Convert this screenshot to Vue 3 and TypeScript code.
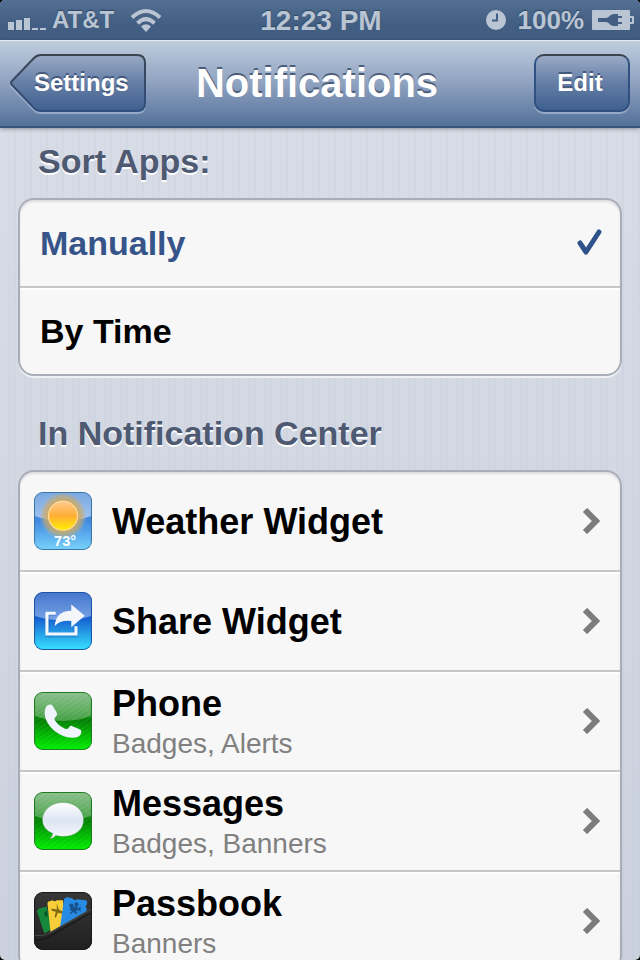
<script setup lang="ts">
import { ref } from 'vue'

type IconName = 'weather' | 'share' | 'phone' | 'messages' | 'passbook'

interface AppEntry {
  name: string
  icon: IconName
  detail?: string
}

const sortOptions: string[] = ['Manually', 'By Time']
const sortBy = ref<string>('Manually')

const apps: AppEntry[] = [
  { name: 'Weather Widget', icon: 'weather' },
  { name: 'Share Widget', icon: 'share' },
  { name: 'Phone', icon: 'phone', detail: 'Badges, Alerts' },
  { name: 'Messages', icon: 'messages', detail: 'Badges, Banners' },
  { name: 'Passbook', icon: 'passbook', detail: 'Banners' },
]
</script>

<template>
  <div class="screen">
    <div class="status">
      <div class="status-side">
        <svg class="signal" width="38" height="20" viewBox="0 0 38 20" aria-hidden="true">
          <path d="M0 12h6v8H0zM8 10h6v10H8zM16 8h6v12h-6zM24 18h6v2h-6zM32 18h6v2h-6z" fill="#bac5d3" />
        </svg>
        <span class="carrier">AT&amp;T</span>
        <svg class="wifi" width="32" height="24" viewBox="0 0 32 24" aria-hidden="true">
          <g fill="none" stroke="#bac5d3" stroke-width="4">
            <path d="M2 9.500Q16 -3.500 30 9.500" />
            <path d="M7.500 15.200Q16 7 24.500 15.200" />
          </g>
          <path d="M11 18.500Q16 14 21 18.500L16 24z" fill="#bac5d3" />
        </svg>
      </div>
      <span class="time">12:23 PM</span>
      <div class="status-side end">
        <svg width="20" height="20" viewBox="0 0 20 20" aria-hidden="true">
          <circle cx="10" cy="10" r="10" fill="#bac5d3" />
          <path d="M11 3.500v7H6" fill="none" stroke="#425f83" stroke-width="2" />
        </svg>
        <span class="percent">100%</span>
        <svg width="42" height="20" viewBox="0 0 42 20" aria-hidden="true">
          <path d="M1 0h36a1 1 0 0 1 1 1v5h3a1 1 0 0 1 1 1v6a1 1 0 0 1-1 1h-3v5a1 1 0 0 1-1 1H1a1 1 0 0 1-1-1V1a1 1 0 0 1 1-1zM38 8v4h2V8z" fill="#bac5d3" fill-rule="evenodd" />
          <path d="M6 8h8c3 0 4-4 8-4h4v2h4v2h-4v4h4v2h-4v2h-4c-4 0-5-4-8-4H6z" fill="#425f83" />
        </svg>
      </div>
    </div>

    <header class="nav">
      <div class="nav-side">
        <a class="back" href="#settings">
          <svg class="back-shape" width="140" height="64" viewBox="0 0 140 64" aria-hidden="true">
            <defs>
              <linearGradient id="back-fill" x1="0" y1="0" x2="0" y2="1">
                <stop offset="0" stop-color="#99aac6" />
                <stop offset=".5" stop-color="#657ea6" />
                <stop offset="1" stop-color="#3f608f" />
              </linearGradient>
              <linearGradient id="back-edge" x1="0" y1="0" x2="0" y2="1">
                <stop offset="0" stop-color="#3b4351" />
                <stop offset="1" stop-color="#2f5081" />
              </linearGradient>
            </defs>
            <path d="M24 3Q27 1 31 1H127Q135 1 135 9V49Q135 57 127 57H31Q27 57 24 54L1 30Q0 29 1 28z" fill="none" stroke="#b9c7da" stroke-width="2" transform="translate(0 2)" opacity=".6" />
            <path d="M24 4Q27 1 31 1H127Q135 1 135 9V49Q135 57 127 57H31Q27 57 24 54L2 31Q0 29 2 27z" fill="url(#back-fill)" stroke="url(#back-edge)" stroke-width="2" />
          </svg>
          <span class="back-label">Settings</span>
        </a>
      </div>
      <h1>Notifications</h1>
      <div class="nav-side end">
        <button class="edit" type="button">Edit</button>
      </div>
    </header>

    <main class="content">
      <h2 id="sort-heading">Sort Apps:</h2>
      <div class="group" role="radiogroup" aria-labelledby="sort-heading">
        <label v-for="option in sortOptions" :key="option" class="option" :class="{ chosen: sortBy === option }">
          <input v-model="sortBy" class="radio" type="radio" name="sort" :value="option" />
          <span>{{ option }}</span>
          <svg v-if="sortBy === option" width="26" height="30" viewBox="0 0 26 30" aria-hidden="true">
            <path d="M4 15L10 24L23 4" fill="none" stroke="#30528a" stroke-width="5" stroke-linecap="round" stroke-linejoin="round" />
          </svg>
        </label>
      </div>

      <h2>In Notification Center</h2>
      <nav class="group">
        <a v-for="app in apps" :key="app.name" class="app" :href="'#' + app.icon">
          <svg v-if="app.icon === 'weather'" class="icon" viewBox="1 1 56 56" aria-hidden="true">
            <defs>
              <linearGradient id="w-bg" x1="0" y1="0" x2="0" y2="1">
                <stop offset="0" stop-color="#3f82d4" />
                <stop offset=".5" stop-color="#438be2" />
                <stop offset="1" stop-color="#78d2fa" />
              </linearGradient>
              <linearGradient id="w-gloss" x1="0" y1="0" x2="0" y2="1">
                <stop offset="0" stop-color="#fff" stop-opacity=".3" />
                <stop offset="1" stop-color="#fff" stop-opacity=".5" />
              </linearGradient>
              <radialGradient id="w-glow">
                <stop offset=".55" stop-color="#e5a932" />
                <stop offset=".72" stop-color="#d5ad61" stop-opacity=".7" />
                <stop offset="1" stop-color="#d8b576" stop-opacity="0" />
              </radialGradient>
              <linearGradient id="w-sun" x1="0" y1="0" x2="0" y2="1">
                <stop offset="0" stop-color="#ffc98c" />
                <stop offset=".5" stop-color="#ffae35" />
                <stop offset="1" stop-color="#fff000" />
              </linearGradient>
            </defs>
            <rect x="1" y="1" width="56" height="56" rx="8" fill="url(#w-bg)" />
            <path d="M1 24V9Q1 1 9 1H49Q57 1 57 9V24Q29 34 1 24z" fill="url(#w-gloss)" />
            <circle cx="29" cy="24" r="23" fill="url(#w-glow)" />
            <circle cx="29" cy="24" r="18" fill="none" stroke="#cb9d4f" stroke-width="5" stroke-dasharray="1 2" opacity=".4" />
            <circle cx="29" cy="24" r="14" fill="url(#w-sun)" stroke="#ffe2ad" />
            <text x="31" y="53" class="degrees" text-anchor="middle">73°</text>
            <rect x="1" y="1" width="56" height="56" rx="8" fill="none" stroke="#3c75a9" stroke-width="2" />
          </svg>

          <svg v-else-if="app.icon === 'share'" class="icon" viewBox="1 1 56 56" aria-hidden="true">
            <defs>
              <linearGradient id="s-bg" x1="0" y1="0" x2="0" y2="1">
                <stop offset="0" stop-color="#1552be" />
                <stop offset=".45" stop-color="#165fd0" />
                <stop offset="1" stop-color="#37e3ff" />
              </linearGradient>
              <linearGradient id="s-gloss" x1="0" y1="0" x2="0" y2="1">
                <stop offset="0" stop-color="#fff" stop-opacity=".2" />
                <stop offset="1" stop-color="#fff" stop-opacity=".42" />
              </linearGradient>
            </defs>
            <rect x="1" y="1" width="56" height="56" rx="8" fill="url(#s-bg)" />
            <path d="M1 24V9Q1 1 9 1H49Q57 1 57 9V24Q29 33 1 24z" fill="url(#s-gloss)" />
            <path d="M22 21H14V42H41V35" fill="none" stroke="#174f9e" stroke-width="4" opacity=".3" transform="translate(0 1)" />
            <path d="M22 21.500H13.500V41.500H41.500V34" fill="none" stroke="#f4f7fc" stroke-width="3" />
            <path d="M37 13L50 24L37 35V29Q26 28 21 34Q22 19 37 19z" fill="#f5f6fa" />
            <rect x="1" y="1" width="56" height="56" rx="8" fill="none" stroke="#1b55a5" stroke-width="2" />
          </svg>

          <svg v-else-if="app.icon === 'phone' || app.icon === 'messages'" class="icon" viewBox="1 1 56 56" aria-hidden="true">
            <defs>
              <linearGradient :id="app.icon + '-bg'" x1="0" y1="0" x2="0" y2="1">
                <stop offset="0" stop-color="#2c8a2e" />
                <stop offset=".5" stop-color="#027f03" />
                <stop offset="1" stop-color="#00f000" />
              </linearGradient>
              <linearGradient :id="app.icon + '-gloss'" x1="0" y1="0" x2="0" y2="1">
                <stop offset="0" stop-color="#fff" stop-opacity=".45" />
                <stop offset="1" stop-color="#fff" stop-opacity=".25" />
              </linearGradient>
              <pattern :id="app.icon + '-lines'" width="4" height="4" patternUnits="userSpaceOnUse" patternTransform="rotate(55)">
                <rect width="2" height="4" fill="#9f9" opacity=".08" />
              </pattern>
              <linearGradient :id="app.icon + '-mark'" x1="0" y1="0" x2="0" y2="1">
                <stop offset="0" stop-color="#fff" />
                <stop offset=".5" stop-color="#dce5f2" />
                <stop offset="1" stop-color="#f6f9ff" />
              </linearGradient>
            </defs>
            <rect x="1" y="1" width="56" height="56" rx="8" :fill="`url(#${app.icon}-bg)`" />
            <rect x="1" y="1" width="56" height="56" rx="8" :fill="`url(#${app.icon}-lines)`" />
            <path d="M1 24V9Q1 1 9 1H49Q57 1 57 9V24Q29 34 1 24z" :fill="`url(#${app.icon}-gloss)`" />
            <path v-if="app.icon === 'phone'" d="M17 13Q19 13 20 16L23 21Q24 23 22 25Q20 26 21 28Q24 33 30 36Q33 38 35 35Q36 33 38 34L45 37Q48 38 46 42Q43 46 36 45C22 44 8 29 12 17Q13 13 17 13z" fill="#f0f4fc" />
            <path v-else d="M29 11C40 11 49 18 49 28S40 44 29 44Q25 44 22 43Q20 46 16 46Q19 44 19 41Q9 37 9 28C9 18 18 11 29 11z" fill="url(#messages-mark)" stroke="#25852b" stroke-width="1" stroke-opacity=".4" />
            <rect x="1" y="1" width="56" height="56" rx="8" fill="none" stroke="#1d7c20" stroke-width="2" />
          </svg>

          <svg v-else class="icon" viewBox="1 1 56 56" aria-hidden="true">
            <defs>
              <linearGradient id="p-bg" x1="0" y1="0" x2="0" y2="1">
                <stop offset="0" stop-color="#373737" />
                <stop offset="1" stop-color="#202020" />
              </linearGradient>
              <linearGradient id="p-pocket" x1="0" y1="0" x2="0" y2="1">
                <stop offset="0" stop-color="#323232" />
                <stop offset="1" stop-color="#1f1f1f" />
              </linearGradient>
            </defs>
            <rect x="1" y="1" width="56" height="56" rx="8" fill="url(#p-bg)" />
            <path d="M4 20Q4 18 6 17L13 15L20 36L11 41z" fill="#16883b" />
            <path d="M14 19a3 3 0 1 0 0 6z" fill="#0b5424" />
            <path d="M14 12Q14 10 16 10L19 9Q21 11 23 9L29 9L31 31L17 40z" fill="#f7cd38" />
            <path d="M23 12L25 18L29 20V22L24 21L22 26L21 25L22 20L18 19V17L23 18z" fill="#806912" />
            <path d="M30 8Q31 6 33 6L38 7Q40 10 43 8L51 9Q53 10 52 13Q50 15 52 17L51 22L26 36z" fill="#288be3" />
            <g fill="#16538e">
              <circle cx="37" cy="14" r="2" />
              <circle cx="42" cy="13" r="2" />
              <path d="M36 15h7v4h-7zM43 17l3-2v5l-3-2zM38 19l-3 3h2l2-2 2 2h2l-2-3z" />
            </g>
            <path d="M1 43H7Q11 43 15 41L57 17V49Q57 57 49 57H9Q1 57 1 49z" fill="url(#p-pocket)" stroke="#484848" />
            <path d="M2 47H8Q12 47 16 44L56 21" fill="none" stroke="#161616" />
            <rect x="1" y="1" width="56" height="56" rx="8" fill="none" stroke="#1a1a1a" stroke-width="2" />
          </svg>

          <span class="labels">
            <span class="name">{{ app.name }}</span>
            <span v-if="app.detail" class="detail">{{ app.detail }}</span>
          </span>
          <svg class="chevron" width="18" height="26" viewBox="0 0 18 26" aria-hidden="true">
            <path d="M3 2L14 13L3 24" fill="none" stroke="#7c7c7c" stroke-width="6" />
          </svg>
        </a>
      </nav>
    </main>
  </div>
</template>

<style>
body {
  margin: 0;
  background: #000;
}
</style>

<style scoped>
.screen {
  display: flex;
  flex-direction: column;
  height: 100vh;
  overflow: hidden;
  border-radius: 5px;
  background:
    linear-gradient(rgba(190, 198, 214, 0) 15%, rgba(190, 198, 214, 0.5)),
    repeating-linear-gradient(90deg, #d8dce6 0 8px, #d4d9e3 8px 10px, #d6dbe5 10px 14px, #d2d8e2 14px 16px);
  font-family: "Liberation Sans", Arial, Helvetica, sans-serif;
}

.status {
  display: grid;
  grid-template-columns: 1fr auto 1fr;
  align-items: center;
  flex: none;
  box-sizing: border-box;
  height: 40px;
  padding: 0 6px 2px 8px;
  background: linear-gradient(#536f92, #425f83 60%, #405d81);
  color: #bac5d3;
  font-weight: bold;
  text-shadow: 0 -1px 1px #2c4565;
}

.status-side {
  display: flex;
  align-items: center;
  gap: 8px;
}

.status-side.end {
  justify-content: flex-end;
}

.carrier {
  font-size: 24px;
  line-height: 40px;
  margin-left: -2px;
}

.wifi {
  margin-left: 8px;
}

.time {
  padding-top: 2px;
  font-size: 28px;
}

.percent {
  padding-left: 4px;
  font-size: 26px;
  line-height: 40px;
}

.nav {
  display: grid;
  grid-template-columns: 1fr auto 1fr;
  align-items: center;
  flex: none;
  box-sizing: border-box;
  height: 88px;
  padding: 0 10px;
  border-bottom: 2px solid #365680;
  background: linear-gradient(#bfcddd, #8fa2c0 50%, #54719a);
  box-shadow: inset 0 1px 0 #e3eaf2, 0 1px 4px rgba(0, 0, 0, 0.35);
}

.nav-side {
  display: flex;
}

.nav-side.end {
  justify-content: flex-end;
}

.back {
  display: grid;
  width: 136px;
  height: 58px;
  color: #fff;
  text-decoration: none;
}

.back-shape,
.back-label {
  grid-area: 1 / 1;
}

.back-label {
  z-index: 1;
  padding-left: 24px;
}

.back-label,
.edit {
  color: #fff;
  font-size: 24px;
  font-weight: bold;
  line-height: 58px;
  text-shadow: 0 -2px 0 #43587b;
}

.edit {
  box-sizing: border-box;
  width: 96px;
  height: 58px;
  padding: 0 4px 0 0;
  border: 2px solid #2f5081;
  border-top-color: #3b4351;
  border-radius: 10px;
  background: linear-gradient(#99aac6, #657ea6 50%, #3f608f);
  box-shadow: 0 2px 0 rgba(185, 199, 218, 0.6);
  font-family: inherit;
  line-height: 54px;
}

h1 {
  margin: 0;
  padding-right: 6px;
  color: #fff;
  font-size: 40px;
  line-height: 84px;
  text-shadow: 0 -2px 0 #4c5d77;
}

.content {
  flex: 1;
  min-height: 0;
  padding: 0 18px;
  overflow: hidden;
}

h2 {
  margin: 0;
  padding: 13px 20px 17px;
  color: #4e5972;
  font-size: 34px;
  line-height: 40px;
  text-shadow: 0 2px 0 #fff;
}

.group + h2 {
  padding-top: 37px;
}

.group {
  border: 2px solid #a8adb8;
  border-radius: 16px;
  background: #f7f7f7;
  box-shadow: 0 2px 0 #eef0f4, inset 0 2px 2px #dedede;
}

.option {
  display: flex;
  align-items: center;
  justify-content: space-between;
  height: 86px;
  padding: 0 18px 0 20px;
  color: #000;
  font-size: 34px;
  font-weight: bold;
}

.option.chosen {
  color: #36548a;
}

.option + .option,
.app + .app {
  border-top: 2px solid #c6c6c6;
  box-shadow: inset 0 2px 0 #fff;
}

.radio {
  position: absolute;
  margin: 0;
  opacity: 0;
}

.app {
  display: flex;
  align-items: center;
  gap: 20px;
  height: 98px;
  padding: 0 20px 0 14px;
  color: #000;
  text-decoration: none;
}

.icon {
  flex: none;
  width: 58px;
  height: 58px;
  border-radius: 9px;
}

.degrees {
  fill: #fff;
  font-size: 14px;
  font-weight: bold;
}

.labels {
  display: flex;
  flex: 1;
  flex-direction: column;
  padding-top: 2px;
}

.name {
  font-size: 36px;
  font-weight: bold;
  line-height: 44px;
}

.detail {
  color: #808080;
  font-size: 28px;
  line-height: 36px;
}

.chevron {
  flex: none;
}
</style>
